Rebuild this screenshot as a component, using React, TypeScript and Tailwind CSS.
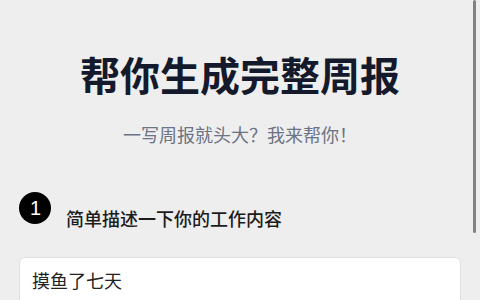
import { FC } from 'react';

const App: FC = () => {
  return (
    <div
      className="relative min-h-screen overflow-hidden bg-[#eeeeee] px-[19px]"
      style={{ fontFamily: '"Noto Sans CJK SC", "Noto Sans", sans-serif' }}
    >
      {/* Header */}
      <h1 className="mt-[50px] text-center text-[40px] font-bold leading-[48px] text-[#141a2c]">
        帮你生成完整周报
      </h1>
      <p className="mt-[22px] text-center text-[18px] leading-[28px] text-[#6b7384]">
        一写周报就头大？我来帮你！
      </p>

      {/* Step 1 */}
      <div className="mt-[44px] flex items-start gap-[15px]">
        <div className="flex h-[32px] w-[32px] shrink-0 items-center justify-center rounded-full bg-black pb-[1px] pl-[1px] font-['Liberation_Sans',sans-serif] text-[20px] leading-none text-white">
          1
        </div>
        <h2 className="mt-[12px] text-[18px] font-medium leading-[28px] text-[#1c1c1c]">
          简单描述一下你的工作内容
        </h2>
      </div>

      <div className="mt-[25px] min-h-[120px] rounded-md border border-[#e0e0e0] bg-white px-3 pt-2 text-[18px] leading-[28px] text-[#222222]">
        摸鱼了七天
      </div>

      {/* overlay scrollbar */}
      <div className="absolute right-[4px] top-0 h-[233px] w-[3px] rounded-full bg-[#828282]" />
    </div>
  );
};

export default App;
